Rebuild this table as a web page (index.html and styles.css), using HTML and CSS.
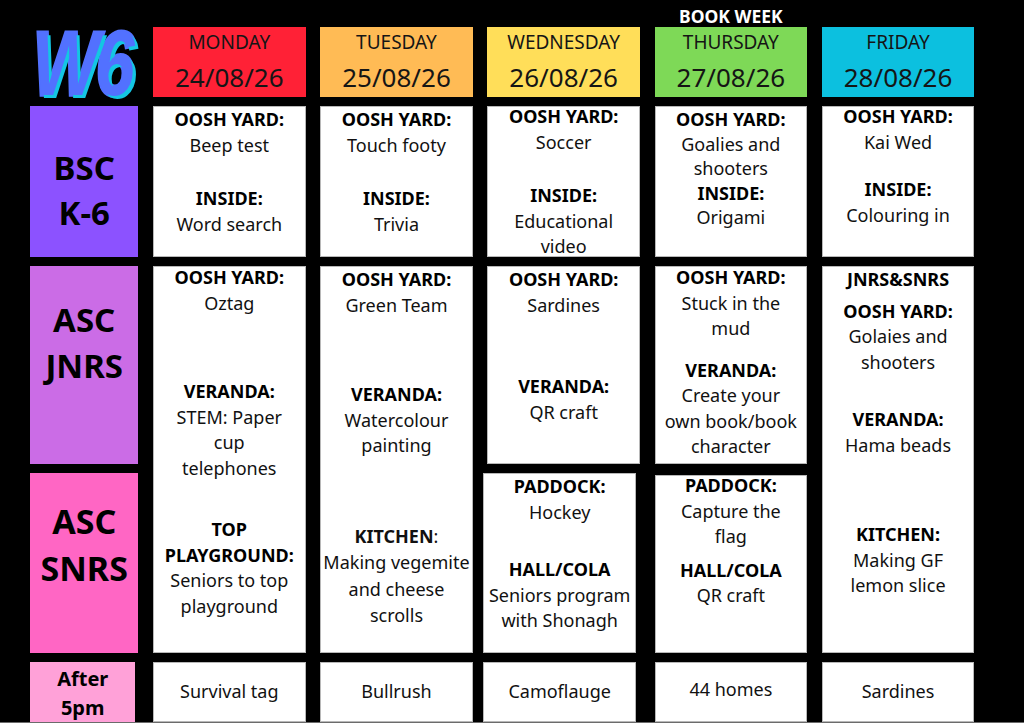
FILE: index.html
```html
<!DOCTYPE html>
<html lang="en">
<head>
<meta charset="utf-8">
<title>W6 Schedule</title>
<link rel="stylesheet" href="styles.css">
</head>
<body>
<div class="page">
  <div class="topbar">
    <div class="book">BOOK WEEK</div>
  </div>
  <div class="board">
    <div class="logo"><span class="logo-text">W6</span></div>
    <div class="day mon"><span class="day-name">MONDAY</span><span class="day-date">24/08/26</span></div>
    <div class="day tue"><span class="day-name">TUESDAY</span><span class="day-date">25/08/26</span></div>
    <div class="day wed"><span class="day-name">WEDNESDAY</span><span class="day-date">26/08/26</span></div>
    <div class="day thu"><span class="day-name">THURSDAY</span><span class="day-date">27/08/26</span></div>
    <div class="day fri"><span class="day-name">FRIDAY</span><span class="day-date">28/08/26</span></div>

    <div class="rl rl-bsc">BSC<br>K-6</div>
    <div class="card">
      <div class="sec"><div class="lbl">OOSH YARD:</div><div>Beep test</div></div>
      <div class="sec g28"><div class="lbl">INSIDE:</div><div>Word search</div></div>
    </div>
    <div class="card">
      <div class="sec"><div class="lbl">OOSH YARD:</div><div>Touch footy</div></div>
      <div class="sec g28"><div class="lbl">INSIDE:</div><div>Trivia</div></div>
    </div>
    <div class="card">
      <div class="sec up3"><div class="lbl">OOSH YARD:</div><div>Soccer</div></div>
      <div class="sec g28"><div class="lbl">INSIDE:</div><div>Educational<br>video</div></div>
    </div>
    <div class="card tight">
      <div class="sec"><div class="lbl">OOSH YARD:</div><div>Goalies and<br>shooters</div></div>
      <div class="sec"><div class="lbl">INSIDE:</div><div>Origami</div></div>
    </div>
    <div class="card">
      <div class="sec up3"><div class="lbl">OOSH YARD:</div><div>Kai Wed</div></div>
      <div class="sec g22"><div class="lbl">INSIDE:</div><div>Colouring in</div></div>
    </div>

    <div class="rl rl-jnrs">ASC<br>JNRS</div>
    <div class="card span2">
      <div class="sec up2"><div class="lbl">OOSH YARD:</div><div>Oztag</div></div>
      <div class="sec g63"><div class="lbl">VERANDA:</div><div>STEM: Paper<br>cup<br>telephones</div></div>
      <div class="sec g36"><div class="lbl">TOP<br>PLAYGROUND:</div><div>Seniors to top<br>playground</div></div>
    </div>
    <div class="card span2">
      <div class="sec"><div class="lbl">OOSH YARD:</div><div>Green Team</div></div>
      <div class="sec g64"><div class="lbl">VERANDA:</div><div>Watercolour<br>painting</div></div>
      <div class="sec g64 loose"><div><b>KITCHEN</b>:</div><div>Making vegemite<br>and cheese<br>scrolls</div></div>
    </div>
    <div class="card">
      <div class="sec"><div class="lbl">OOSH YARD:</div><div>Sardines</div></div>
      <div class="sec g56"><div class="lbl">VERANDA:</div><div>QR craft</div></div>
    </div>
    <div class="card">
      <div class="sec up2"><div class="lbl">OOSH YARD:</div><div>Stuck in the<br>mud</div></div>
      <div class="sec g16"><div class="lbl">VERANDA:</div><div>Create your<br>own book/book<br>character</div></div>
    </div>
    <div class="card span2">
      <div class="sec"><div class="lbl">JNRS&amp;SNRS</div></div>
      <div class="sec g6"><div class="lbl">OOSH YARD:</div><div>Golaies and<br>shooters</div></div>
      <div class="sec g32"><div class="lbl">VERANDA:</div><div>Hama beads</div></div>
      <div class="sec g64"><div class="lbl">KITCHEN:</div><div>Making GF<br>lemon slice</div></div>
    </div>

    <div class="rl rl-snrs">ASC<br>SNRS</div>
    <div class="card shift-l">
      <div class="sec"><div class="lbl">PADDOCK:</div><div>Hockey</div></div>
      <div class="sec g32"><div class="lbl">HALL/COLA</div><div>Seniors program<br>with Shonagh</div></div>
    </div>
    <div class="card shift-d">
      <div class="sec up3"><div class="lbl">PADDOCK:</div><div>Capture the<br>flag</div></div>
      <div class="sec g8"><div class="lbl">HALL/COLA</div><div>QR craft</div></div>
    </div>

    <div class="rl rl-after">After<br>5pm</div>
    <div class="card after">Survival tag</div>
    <div class="card after">Bullrush</div>
    <div class="card after shift-l">Camoflauge</div>
    <div class="card after up-after">44 homes</div>
    <div class="card after">Sardines</div>
  </div>
</div>
</body>
</html>
```

FILE: styles.css
```css
* { box-sizing: border-box; }

body {
  margin: 0;
  background: #000;
  font-family: "Noto Sans", "DejaVu Sans", sans-serif;
}

.page {
  width: 1024px;
  height: 723px;
  background: #000;
  border-bottom: 1px solid #6b6b6b;
  overflow: hidden;
}

.topbar,
.board {
  display: grid;
  grid-template-columns: 108.4px repeat(5, 152.6px);
  column-gap: 14.6px;
  padding-left: 30px;
}

.topbar {
  height: 27px;
}

.book {
  grid-column: 5;
  color: #fff;
  font-weight: 700;
  font-size: 17.5px;
  line-height: 20px;
  padding-top: 6px;
  text-align: center;
  white-space: nowrap;
}

.board {
  grid-template-rows: 70px 151px 198px 180px 60px;
  row-gap: 9px;
}

/* logo */
.logo {
  display: flex;
  align-items: center;
  justify-content: center;
  overflow: visible;
}

.logo-text {
  font-family: "Liberation Sans", Arial, sans-serif;
  font-weight: 700;
  font-style: italic;
  font-size: 90px;
  line-height: 1;
  letter-spacing: -4px;
  color: #5271ff;
  -webkit-text-stroke: 3.5px #5271ff;
  paint-order: stroke fill;
  text-shadow: 4px 3px 0 #14c6e3;
  transform: scaleX(0.78) translateY(2px);
  display: inline-block;
  padding-right: 6px;
}

/* day headers */
.day {
  display: flex;
  flex-direction: column;
  align-items: center;
  color: #151515;
}

.day-name {
  font-size: 19px;
  line-height: 24px;
  margin-top: 3px;
}

.day-date {
  font-size: 26px;
  line-height: 30px;
  margin-top: 8px;
}

.mon { background: #ff2136; }
.tue { background: #ffbb55; }
.wed { background: #ffde59; }
.thu { background: #7ed957; }
.fri { background: #0cc0df; }

/* row labels */
.rl {
  font-weight: 700;
  font-size: 33px;
  text-align: center;
  color: #000;
}

.rl-bsc {
  background: #8c52ff;
  line-height: 45px;
  padding-top: 39px;
}

.rl-jnrs {
  background: #cb6ce6;
  line-height: 46px;
  padding-top: 31px;
}

.rl-snrs {
  background: #ff66c4;
  line-height: 47px;
  padding-top: 25px;
  font-size: 34px;
}

.rl-after {
  background: #ffa1d8;
  font-size: 20px;
  line-height: 29px;
  padding-top: 2px;
  margin-right: 3px;
}

/* activity cards */
.card {
  background: #fff;
  border: 1px solid #b8b8b8;
  text-align: center;
  color: #111;
  font-size: 18px;
  line-height: 25.5px;
  white-space: nowrap;
}

.card.tight { line-height: 24.5px; }

.span2 { grid-row: span 2; }

.lbl { font-weight: 700; color: #000; }

.loose { line-height: 26.5px; }

.after {
  padding-top: 16px;
}

.shift-l {
  margin-left: -4px;
  margin-right: 4px;
}

.shift-d {
  margin-top: 2px;
}

.up-after {
  padding-top: 14px;
}

.up2 { margin-top: -2px; }
.up3 { margin-top: -3px; }

.g6 { margin-top: 6px; }
.g8 { margin-top: 8px; }
.g16 { margin-top: 16px; }
.g22 { margin-top: 22px; }
.g28 { margin-top: 28px; }
.g32 { margin-top: 32px; }
.g36 { margin-top: 36px; }
.g56 { margin-top: 56px; }
.g63 { margin-top: 63px; }
.g64 { margin-top: 64px; }
```
